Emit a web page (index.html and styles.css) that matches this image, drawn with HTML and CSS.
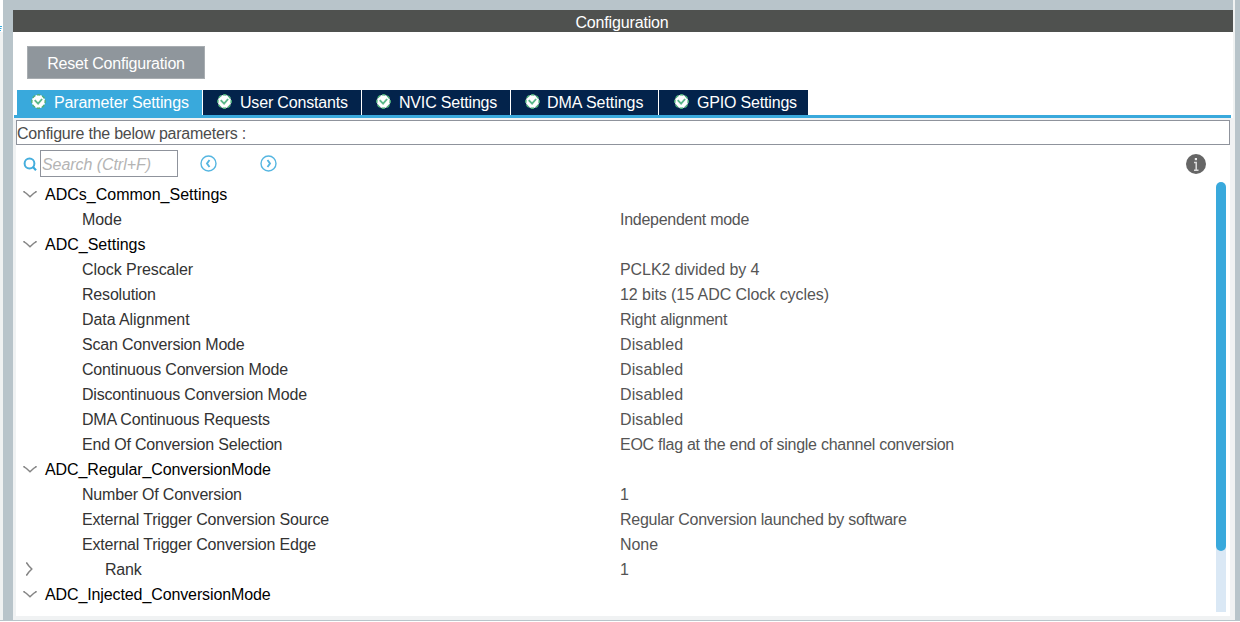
FILE: index.html
```html
<!DOCTYPE html>
<html lang="en">
<head>
<meta charset="utf-8">
<title>Configuration</title>
<link rel="stylesheet" href="styles.css">
</head>
<body>
<svg class="defs" width="0" height="0">
  <symbol id="check" viewBox="0 0 15 15">
    <circle cx="7.500" cy="7.500" r="6.700" fill="#fff" stroke="#4fb07c" stroke-width="1.500" stroke-dasharray="3.300 1.960" stroke-dashoffset="1.600"/>
    <path d="M3.700 6.200l3.400 3.400 4-4.600" fill="none" stroke="#5cb88a" stroke-width="1.900"/>
  </symbol>
  <symbol id="down" viewBox="0 0 14 9">
    <path d="M1 1v.8l2.500 1.700L7 6.800l3.500-3.300L13 1.800V1" fill="none" stroke="#858585" stroke-width="1.500"/>
  </symbol>
</svg>
<div class="window">
  <div class="edge"><svg class="edge-mark" viewBox="0 0 3 6"><path d="M0 .5h2M0 2.500h1.500M0 4.500h1" stroke="#39a9dc"/></svg></div>
  <div class="frame">
    <div class="panel">
      <header class="title">Configuration</header>
      <div class="actions"><button class="reset">Reset Configuration</button></div>
      <nav class="tabs">
        <div class="tab active t1"><svg class="check"><use href="#check"/></svg><span>Parameter Settings</span></div>
        <div class="tab t2"><svg class="check"><use href="#check"/></svg><span>User Constants</span></div>
        <div class="tab t3"><svg class="check"><use href="#check"/></svg><span>NVIC Settings</span></div>
        <div class="tab t4"><svg class="check"><use href="#check"/></svg><span>DMA Settings</span></div>
        <div class="tab t5"><svg class="check"><use href="#check"/></svg><span>GPIO Settings</span></div>
      </nav>
      <div class="content">
        <div class="hint">Configure the below parameters :</div>
        <div class="body">
          <div class="toolbar">
            <svg class="search-icon" viewBox="0 0 14 14"><circle cx="6.500" cy="6.500" r="4.900" fill="none" stroke="#45aedd" stroke-width="2"/><path d="M9.700 9.700l3.300 3.500" stroke="#39a9dc" stroke-width="2.200"/></svg>
            <div class="search">Search (Ctrl+F)</div>
            <svg class="nav prev" viewBox="0 0 17 17"><circle cx="8.500" cy="8.500" r="7.500" fill="none" stroke="#56b6e1" stroke-width="1.400"/><path d="M9.500 5L7 8.500 9.500 12" fill="none" stroke="#56b6e1" stroke-width="1.900"/></svg>
            <svg class="nav next" viewBox="0 0 17 17"><circle cx="8.500" cy="8.500" r="7.500" fill="none" stroke="#56b6e1" stroke-width="1.400"/><path d="M7.500 5L10 8.500 7.500 12" fill="none" stroke="#56b6e1" stroke-width="1.900"/></svg>
            <svg class="info" viewBox="0 0 20 20"><circle cx="10" cy="10" r="10" fill="#666"/><path d="M8 8.500h2.200v7.500M8 16.300h4.500" fill="none" stroke="#ddd" stroke-width="1.500"/><rect x="8.800" y="4" width="2.200" height="2.200" fill="#eee"/></svg>
          </div>
          <div class="list-area">
            <div class="list">
              <div class="group"><svg class="down"><use href="#down"/></svg>ADCs_Common_Settings</div>
              <div class="row"><span class="name short">Mode</span><span class="value tight">Independent mode</span></div>
              <div class="group"><svg class="down"><use href="#down"/></svg>ADC_Settings</div>
              <div class="row"><span class="name short">Clock Prescaler</span><span class="value">PCLK2 divided by 4</span></div>
              <div class="row"><span class="name">Resolution</span><span class="value">12 bits (15 ADC Clock cycles)</span></div>
              <div class="row"><span class="name short">Data Alignment</span><span class="value tight">Right alignment</span></div>
              <div class="row"><span class="name">Scan Conversion Mode</span><span class="value wide">Disabled</span></div>
              <div class="row"><span class="name">Continuous Conversion Mode</span><span class="value wide">Disabled</span></div>
              <div class="row"><span class="name">Discontinuous Conversion Mode</span><span class="value wide">Disabled</span></div>
              <div class="row"><span class="name">DMA Continuous Requests</span><span class="value wide">Disabled</span></div>
              <div class="row"><span class="name">End Of Conversion Selection</span><span class="value tight">EOC flag at the end of single channel conversion</span></div>
              <div class="group long"><svg class="down"><use href="#down"/></svg>ADC_Regular_ConversionMode</div>
              <div class="row"><span class="name">Number Of Conversion</span><span class="value">1</span></div>
              <div class="row"><span class="name">External Trigger Conversion Source</span><span class="value tight">Regular Conversion launched by software</span></div>
              <div class="row"><span class="name">External Trigger Conversion Edge</span><span class="value">None</span></div>
              <div class="row"><svg class="right" viewBox="0 0 9 14"><path d="M1 1h.8l1.700 2.500L6.800 7l-3.300 3.500L1.800 13H1" fill="none" stroke="#858585" stroke-width="1.500"/></svg><span class="name nested">Rank</span><span class="value">1</span></div>
              <div class="group long"><svg class="down"><use href="#down"/></svg>ADC_Injected_ConversionMode</div>
            </div>
            <div class="track"><div class="thumb"></div></div>
          </div>
        </div>
      </div>
    </div>
    <div class="gutter"></div>
  </div>
</div>
</body>
</html>
```
FILE: styles.css
```css
* { box-sizing: border-box; }
body {
  margin: 0;
  background: #fff;
  font: 16px/25px "Liberation Sans", Arial, sans-serif;
  color: #333;
  overflow: hidden;
}
svg { display: block; flex: none; }
.defs { position: absolute; }
.window { display: flex; height: 621px; }
.edge {
  width: 3px;
  padding-top: 26px;
  background: linear-gradient(#fff 32px, #f0f2f2 32px);
  border-bottom: 1px solid #b8c4ca;
}
.edge-mark { width: 3px; height: 6px; }
.frame {
  display: flex;
  flex: 1;
  padding: 10px 5px 1px 10px;
  background: linear-gradient(#f0f2f2, #f0f2f2) 1230px 0 / 2px 10px no-repeat, #b8c4ca;
}
.panel {
  display: flex;
  flex-direction: column;
  width: 1220px;
  background: #fff;
}
.gutter { width: 2px; background: #f0f2f2; }
.title {
  height: 22px;
  background: #4f514f;
  color: #fff;
  line-height: 25px;
  text-align: center;
  letter-spacing: -0.15px;
  padding-right: 2px;
}
.actions { height: 58px; padding: 14px; }
.reset {
  display: block;
  width: 178px;
  height: 33px;
  padding: 2px 0 0;
  border: 1px solid #a8adb1;
  background: #8f969c;
  color: #fff;
  font: inherit;
  line-height: 28px;
  letter-spacing: -0.2px;
}
.tabs {
  display: flex;
  gap: 1px;
  height: 28px;
  margin: 0 2px 0 1px;
  padding-left: 3px;
  border-bottom: 3px solid #39a9dc;
}
.tab {
  display: flex;
  align-items: center;
  gap: 8px;
  padding-left: 14px;
  background: #03234b;
  color: #fff;
  letter-spacing: -0.18px;
  white-space: nowrap;
}
.tab.active { background: #39a9dc; letter-spacing: -0.12px; }
.t1 { width: 185px; }
.t2 { width: 158px; }
.t3 { width: 148px; }
.t4 { width: 147px; gap: 7px; letter-spacing: -0.05px; }
.t5 { width: 149px; padding-left: 15px; }
.check { width: 15px; height: 15px; margin-top: -2px; }
.content {
  flex: 1;
  display: flex;
  flex-direction: column;
  padding: 2px 3px 4px;
  background: #f0f2f3;
}
.hint {
  height: 25px;
  border: 1px solid #8f939c;
  background: #fff;
  line-height: 25px;
  letter-spacing: -0.24px;
  color: #4c4c4c;
}
.body { flex: 1; background: #fff; }
.toolbar {
  display: flex;
  align-items: center;
  height: 37px;
  padding: 0 24px 0 7px;
}
.search-icon { width: 14px; height: 14px; margin-right: 3px; }
.search {
  width: 138px;
  height: 27px;
  border: 1px solid #8f939c;
  padding-left: 1px;
  line-height: 27px;
  letter-spacing: -0.06px;
  font-style: italic;
  color: #b4b4b4;
}
.nav { width: 17px; height: 17px; }
.prev { margin-left: 22px; }
.next { margin-left: 43px; }
.info { width: 20px; height: 20px; margin-left: auto; }
.list-area {
  display: flex;
  justify-content: space-between;
  height: 430px;
  padding-right: 4px;
}
.group, .row { display: flex; height: 25px; line-height: 25px; white-space: nowrap; }
.group { color: #000; padding-left: 7px; }
.long { letter-spacing: -0.11px; }
.down { width: 14px; height: 9px; margin: 8px 8px 0 0; }
.row { position: relative; }
.name { width: 604px; padding-left: 66px; letter-spacing: -0.19px; }
.short { letter-spacing: -0.07px; }
.nested { padding-left: 89px; }
.value { color: #555; letter-spacing: -0.06px; }
.tight { letter-spacing: -0.27px; }
.wide { letter-spacing: 0.12px; }
.right { position: absolute; left: 9px; top: 5px; width: 9px; height: 14px; }
.track { width: 10px; background: linear-gradient(#fff 8px, #dae8f5 8px); }
.thumb { height: 369px; border-radius: 5px; background: #39a9dc; }
```
